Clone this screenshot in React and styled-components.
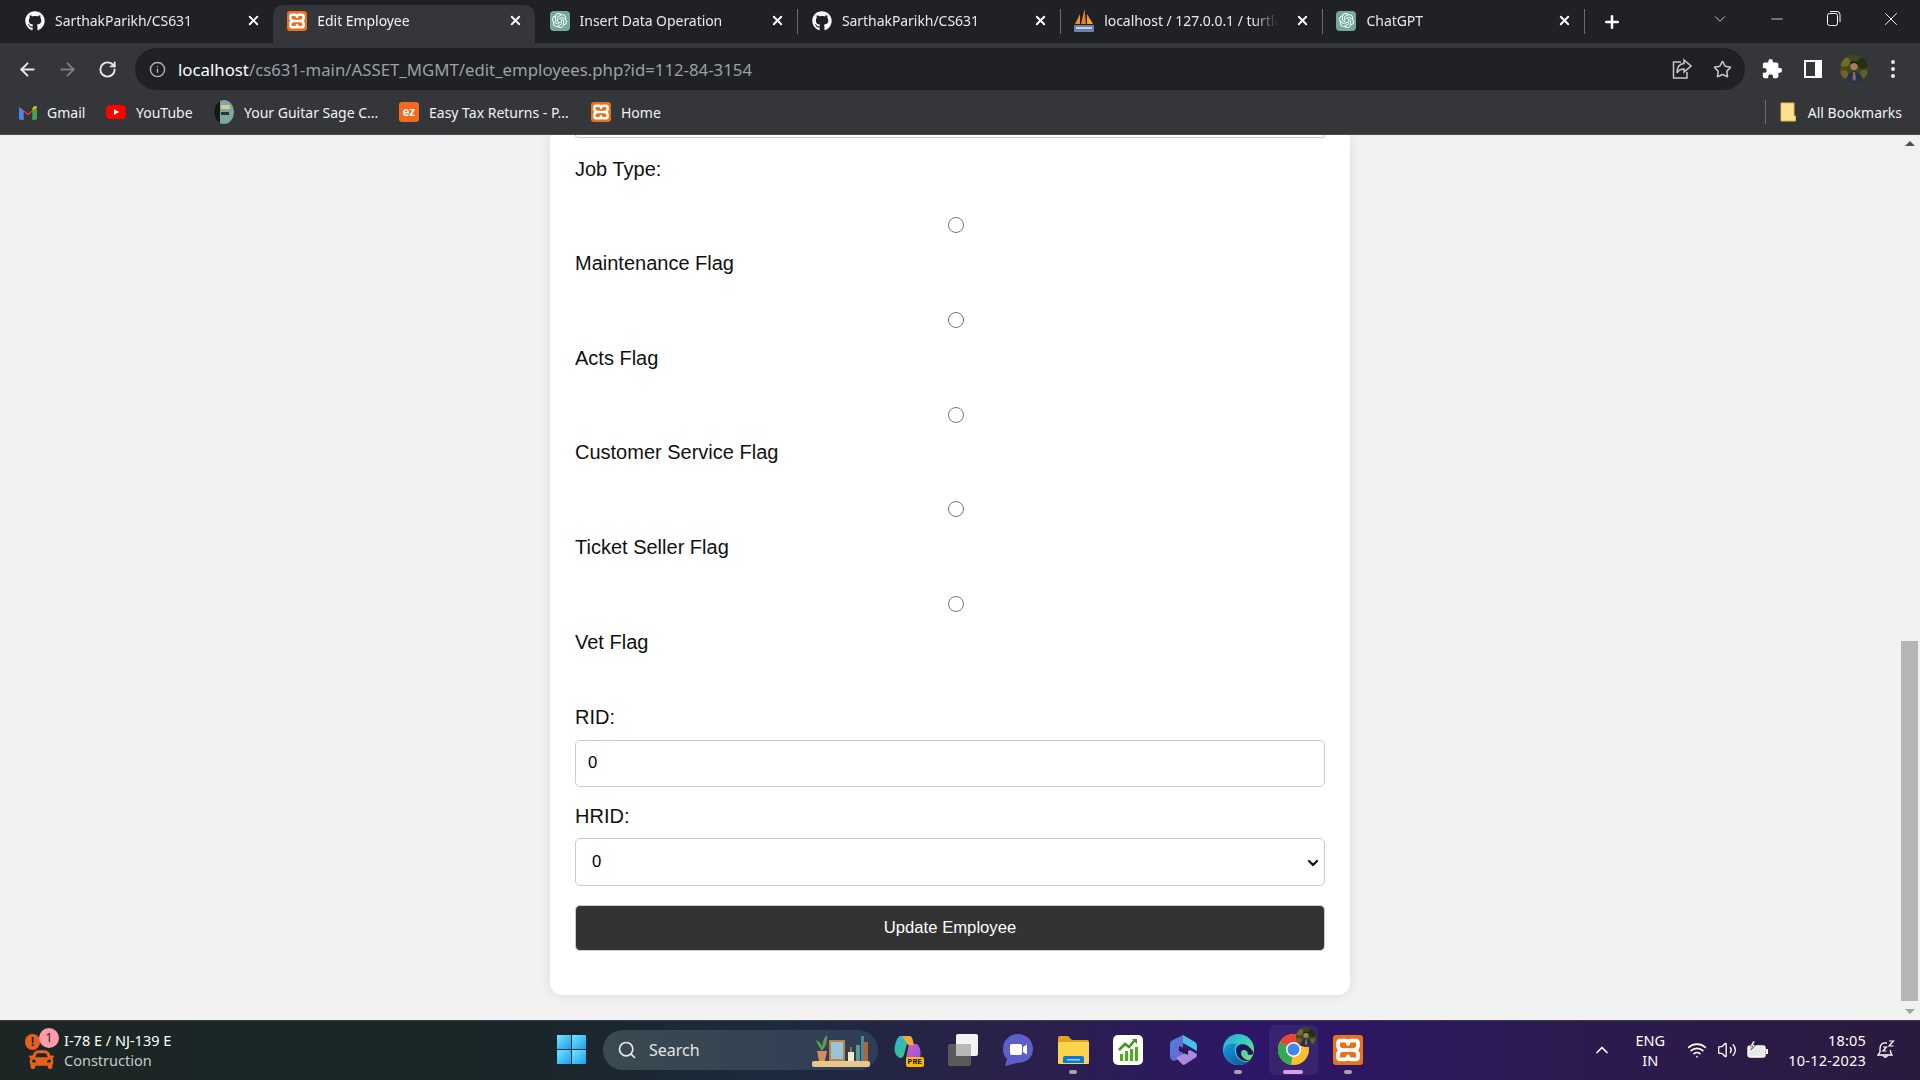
import React from "react";
import styled, { createGlobalStyle } from "styled-components";
import { ArrowLeft, ArrowRight, RotateCw, Info, Star, X, Plus, ChevronDown, ChevronUp, Minus, Search, Wifi, Volume2 } from "lucide-react";
import { FaGithub, FaCar } from "react-icons/fa";
import { MdExtension } from "react-icons/md";
import { SiOpenai, SiYoutube } from "react-icons/si";

const GlobalStyle = createGlobalStyle`
  html, body {
    margin: 0;
    padding: 0;
    height: 100%;
    overflow: hidden;
    background: #f2f2f2;
  }
`;

const uiFont = `"Noto Sans", "Open Sans", sans-serif`;

const tabs = [
  { icon: "github", title: "SarthakParikh/CS631" },
  { icon: "xampp", title: "Edit Employee", active: true },
  { icon: "gpt", title: "Insert Data Operation" },
  { icon: "github", title: "SarthakParikh/CS631", divider: true },
  { icon: "pma", title: "localhost / 127.0.0.1 / turtle", divider: true },
  { icon: "gpt", title: "ChatGPT", divider: true },
];

const flags = ["Maintenance Flag", "Acts Flag", "Customer Service Flag", "Ticket Seller Flag"];

export default function App() {
  return (
    <>
      <GlobalStyle />
      <Screen>
        <TabStrip>
          {tabs.map((tab, i) => (
            <Tab key={i} $active={tab.active} $divider={tab.divider}>
              <TabIcon kind={tab.icon} />
              <TabTitle>{tab.title}</TabTitle>
              <TabClose><X size={15} strokeWidth={3} /></TabClose>
            </Tab>
          ))}
          <NewTab $divider><Plus size={20} strokeWidth={3} /></NewTab>
          <WindowControls>
            <WindowButton $w={58}><ChevronDown size={18} strokeWidth={1} /></WindowButton>
            <WindowButton $w={56}><Minus size={18} strokeWidth={1} /></WindowButton>
            <WindowButton $w={58}><RestoreIcon /></WindowButton>
            <WindowButton $w={56}><X size={22} strokeWidth={1} /></WindowButton>
          </WindowControls>
        </TabStrip>

        <Toolbar>
          <NavButton><ArrowLeft size={21} strokeWidth={2.2} /></NavButton>
          <NavButton $dim><ArrowRight size={21} strokeWidth={2.2} /></NavButton>
          <NavButton><RotateCw size={19} strokeWidth={2.4} /></NavButton>
          <Omnibox>
            <Info size={17} color="#b0b2b6" strokeWidth={2} />
            <Url>
              <UrlHost>localhost</UrlHost>/cs631-main/ASSET_MGMT/edit_employees.php?id=112-84-3154
            </Url>
            <OmniActions>
              <ShareIcon />
              <Star size={19} color="#c4c6ca" strokeWidth={2} />
            </OmniActions>
          </Omnibox>
          <ToolbarActions>
            <MdExtension size={22} color="#fff" />
            <SidePanelIcon />
            <Avatar size={28} clipId="avToolbar" />
            <MenuDots><i /><i /><i /></MenuDots>
          </ToolbarActions>
        </Toolbar>

        <BookmarksBar>
          <Bookmark $w={87}><GmailIcon />Gmail</Bookmark>
          <Bookmark $w={108}><SiYoutube size={20} color="#ff0000" style={{ background: "linear-gradient(#fff,#fff) center/8px 8px no-repeat" }} />YouTube</Bookmark>
          <Bookmark $w={185}><GuitarIcon />Your Guitar Sage C...</Bookmark>
          <Bookmark $w={192}><EzIcon>ez</EzIcon>Easy Tax Returns - P...</Bookmark>
          <Bookmark $w={80}><XamppIcon size={20} />Home</Bookmark>
          <AllBookmarks>
            <FolderIcon />
            All Bookmarks
          </AllBookmarks>
        </BookmarksBar>

        <Viewport>
          <Page>
            <Card>
              <ClippedInput />
              <FieldLabel $gap={36}>Job Type:</FieldLabel>
              <RadioRow><input type="radio" name="job" /></RadioRow>
              {flags.map((flag) => (
                <React.Fragment key={flag}>
                  <FieldLabel $gap={37}>{flag}</FieldLabel>
                  <RadioRow><input type="radio" name="job" /></RadioRow>
                </React.Fragment>
              ))}
              <FieldLabel $gap={52}>Vet Flag</FieldLabel>
              <FieldLabel $gap={11}>RID:</FieldLabel>
              <TextInput defaultValue="0" />
              <FieldLabel $gap={10}>HRID:</FieldLabel>
              <SelectWrap>
                <SelectInput defaultValue="0">
                  <option value="0">0</option>
                </SelectInput>
                <SelectArrow><ChevronDown size={16} strokeWidth={3.4} /></SelectArrow>
              </SelectWrap>
              <SubmitButton>Update Employee</SubmitButton>
            </Card>
          </Page>
          <Scrollbar>
            <ScrollArrow $up />
            <ScrollTrack><ScrollThumb /></ScrollTrack>
            <ScrollArrow />
          </Scrollbar>
        </Viewport>

        <Taskbar>
          <Weather>
            <WeatherIcon>
              <WarnDot>!</WarnDot>
              <FaCar size={25} color="#e8611c" />
              <Badge>1</Badge>
            </WeatherIcon>
            <WeatherText>
              <strong>I-78 E / NJ-139 E</strong>
              <span>Construction</span>
            </WeatherText>
          </Weather>

          <TaskCenter>
            <WindowsLogo><i /><i /><i /><i /></WindowsLogo>
            <SearchPill>
              <Search size={20} color="#e8e8e8" strokeWidth={2} />
              <SearchText>Search</SearchText>
              <ShelfArt />
            </SearchPill>
            <TaskSlot><CopilotIcon /></TaskSlot>
            <TaskSlot><TaskViewIcon /></TaskSlot>
            <TaskSlot><MeetIcon /></TaskSlot>
            <TaskSlot $dot><ExplorerIcon /></TaskSlot>
            <TaskSlot><ChartAppIcon /></TaskSlot>
            <TaskSlot><M365Icon /></TaskSlot>
            <TaskSlot $dot><EdgeIcon /></TaskSlot>
            <TaskSlot $selected><ChromeIcon /></TaskSlot>
            <TaskSlot $dot><XamppIcon size={30} /></TaskSlot>
          </TaskCenter>

          <Tray>
            <ChevronUp size={20} color="#fff" strokeWidth={2} />
            <Lang><span>ENG</span><span>IN</span></Lang>
            <TrayIcons>
              <Wifi size={20} color="#fff" strokeWidth={2} />
              <Volume2 size={20} color="#fff" strokeWidth={1.6} />
              <BatteryIcon />
            </TrayIcons>
            <Clock><span>18:05</span><span>10-12-2023</span></Clock>
            <BellIcon />
          </Tray>
        </Taskbar>
      </Screen>
    </>
  );
}

function TabIcon({ kind }) {
  if (kind === "github") return <FaGithub size={20} color="#fff" />;
  if (kind === "xampp") return <XamppIcon size={20} />;
  if (kind === "gpt") {
    return (
      <GptBadge><SiOpenai size={15} color="#fff" /></GptBadge>
    );
  }
  return <PmaIcon />;
}

function XamppIcon({ size }) {
  return (
    <XamppBadge $size={size}>
      <svg width={size} height={size} viewBox="0 0 24 24" fill="none" stroke="#fff" strokeWidth="3" strokeLinejoin="round">
        <path d="M6 4.500 H9.500 Q12 4.500 12 7 Q12 4.500 14.500 4.500 H18 Q20 4.500 20 6.500 V8.500 Q20 11 17 12 Q20 13 20 15.500 V17.500 Q20 19.500 18 19.500 H14.500 Q12 19.500 12 17 Q12 19.500 9.500 19.500 H6 Q4 19.500 4 17.500 V15.500 Q4 13 7 12 Q4 11 4 8.500 V6.500 Q4 4.500 6 4.500Z" />
        <path d="M7 12 H17" />
      </svg>
    </XamppBadge>
  );
}

function PmaIcon() {
  return (
    <svg width="20" height="24" viewBox="0 0 20 24">
      <path d="M1 15 L6 5 L6 15Z" fill="#f0901e" />
      <path d="M7 15 L10.5 0 L12 15Z" fill="#e8821a" />
      <path d="M13 15 L13 5 L19 15Z" fill="#f5a030" />
      <rect x="0" y="16" width="20" height="7" rx="1" fill="#6a7fb0" />
      <rect x="2" y="18" width="16" height="2" fill="#c6cfe4" />
    </svg>
  );
}

function RestoreIcon() {
  return (
    <svg width="16" height="18" viewBox="0 0 16 18" fill="none" stroke="#fff" strokeWidth="1">
      <rect x="1.5" y="3.5" width="10" height="12" rx="2" />
      <path d="M4 1.5 H11 Q14 1.5 14 4.5 V12" />
    </svg>
  );
}

function ShareIcon() {
  return (
    <svg width="20" height="22" viewBox="0 0 20 22" fill="none" stroke="#c4c6ca" strokeWidth="1.5">
      <path d="M9 4 H1.5 V20 H15 V14" />
      <path d="M12 2 L19 8 L12 14 V11 Q7 11 5 15 Q5 6 12 5.500Z" />
    </svg>
  );
}

function SidePanelIcon() {
  return (
    <svg width="18" height="18" viewBox="0 0 18 18">
      <path fillRule="evenodd" d="M0 0H18V18H0Z M2 2V16H11V2Z" fill="#fff" />
    </svg>
  );
}

function Avatar({ size, clipId }) {
  return (
    <svg width={size} height={size} viewBox="0 0 28 28">
      <defs>
        <clipPath id={clipId}><circle cx="14" cy="14" r="14" /></clipPath>
      </defs>
      <g clipPath={`url(#${clipId})`}>
        <rect width="28" height="28" fill="#3c4a1e" />
        <circle cx="5" cy="7" r="5" fill="#6c6e26" />
        <circle cx="23" cy="8" r="6" fill="#25300f" />
        <circle cx="4" cy="19" r="4" fill="#7a5c2a" />
        <circle cx="24" cy="19" r="4" fill="#5a6428" />
        <rect x="10.500" y="6.500" width="7" height="3" rx="1.500" fill="#1c1512" />
        <circle cx="14" cy="11.500" r="3.600" fill="#a87a60" />
        <path d="M6 28 Q7 17 14 16 Q22 17 23 28Z" fill="#27304e" />
        <path d="M13 17 L15 17 L16 24 L14 26 L12.500 24Z" fill="#8a6a5a" />
      </g>
    </svg>
  );
}

function GmailIcon() {
  return (
    <svg width="18" height="15" viewBox="0 0 20 16">
      <path d="M0 2 L10 9 L20 2 V14 Q20 16 18 16 H15 V7 L10 11 L5 7 V16 H2 Q0 16 0 14Z" fill="#ea4335" />
      <path d="M0 2 V14 Q0 16 2 16 H5 V6Z" fill="#4285f4" />
      <path d="M20 2 V14 Q20 16 18 16 H15 V6Z" fill="#34a853" />
      <path d="M15 6 L20 2 Q19 0 17 1 L15 3Z" fill="#fbbc04" />
    </svg>
  );
}

function GuitarIcon() {
  return (
    <svg width="20" height="24" viewBox="0 0 20 24">
      <ellipse cx="10" cy="12" rx="10" ry="12" fill="#7fa6a0" />
      <path d="M0 12 A10 12 0 0 1 6 1 V23 A10 12 0 0 1 0 12Z" fill="#12181a" />
      <rect x="7" y="5" width="9" height="4" fill="#d8c88a" />
      <rect x="7" y="12" width="8" height="3" fill="#24383a" />
    </svg>
  );
}

function FolderIcon() {
  return (
    <svg width="16" height="20" viewBox="0 0 16 20">
      <path d="M1 1 H14 V14 H15.500 V19 H1Z" fill="#fde293" stroke="#e6bb3c" strokeWidth="1" />
    </svg>
  );
}

function ShelfArt() {
  return (
    <svg width="60" height="36" viewBox="0 0 60 36">
      <rect x="0" y="29" width="58" height="6" rx="2" fill="#e8c88a" />
      <path d="M5 19 H15 L13 29 H7Z" fill="#d88a68" />
      <path d="M10 19 Q5 12 4 8 Q9 10 10 15 Q11 6 15 3 Q16 12 10 19Z" fill="#5aa04a" />
      <rect x="17" y="8" width="16" height="21" fill="#b98448" />
      <rect x="19" y="10" width="12" height="17" fill="#9ac4d8" />
      <rect x="36" y="20" width="6" height="9" fill="#f4e8cc" />
      <rect x="38.500" y="15" width="1" height="5" fill="#f0a030" />
      <rect x="44" y="13" width="4" height="16" fill="#5c9a8a" />
      <rect x="49" y="4" width="3" height="25" fill="#4a8a9a" />
      <rect x="52" y="10" width="4" height="19" fill="#b0643a" />
    </svg>
  );
}

function CopilotIcon() {
  return (
    <CopilotWrap>
      <svg width="28" height="24" viewBox="0 0 28 24">
        <defs>
          <linearGradient id="cpA" x1="0" y1="0" x2="1" y2="1">
            <stop offset="0" stopColor="#2cb6e8" />
            <stop offset="1" stopColor="#3fc06a" />
          </linearGradient>
          <linearGradient id="cpB" x1="0" y1="0" x2="1" y2="1">
            <stop offset="0" stopColor="#e05ab0" />
            <stop offset="1" stopColor="#8a5ae8" />
          </linearGradient>
        </defs>
        <path d="M6 1 H15 L10 20 Q9 23 6 23 Q-1 20 1 10 Q3 2 6 1Z" fill="url(#cpA)" />
        <path d="M15 9 H23 Q28 14 26 23 H12Z" fill="url(#cpB)" />
        <path d="M8 1 H16 Q18 1 19 6 L20 10 H14Z" fill="#f0a83c" />
      </svg>
      <PreTag>PRE</PreTag>
    </CopilotWrap>
  );
}

function TaskViewIcon() {
  return (
    <svg width="30" height="32" viewBox="0 0 30 32">
      <rect x="0" y="10" width="23" height="22" rx="2" fill="#5a5a5a" />
      <rect x="8" y="0" width="22" height="22" rx="2" fill="#f2f2f2" />
      <rect x="8" y="10" width="15" height="12" fill="#b8b8b8" />
    </svg>
  );
}

function MeetIcon() {
  return (
    <svg width="30" height="32" viewBox="0 0 30 32">
      <path d="M15 0 C24 0 30 7 30 15 C30 24 23 29 14 29 L2 32 L4 25 C1 22 0 19 0 15 C0 6 7 0 15 0Z" fill="#5b5fc7" />
      <rect x="7" y="10" width="12" height="11" rx="2" fill="#fff" />
      <path d="M20 13 L24 10.500 V20.500 L20 18Z" fill="#fff" />
    </svg>
  );
}

function ExplorerIcon() {
  return (
    <svg width="31" height="28" viewBox="0 0 31 28">
      <path d="M0 2 Q0 0 2 0 H10 L14 4 H29 Q31 4 31 6 V10 H0Z" fill="#e0a418" />
      <rect x="0" y="6" width="31" height="22" rx="1" fill="#fcd34d" />
      <path d="M5 27 V22 Q5 20 7 20 H24 Q26 20 26 22 V27Z" fill="#0f78d4" />
      <rect x="9" y="23" width="13" height="1.500" fill="#8ed0ff" />
    </svg>
  );
}

function ChartAppIcon() {
  return (
    <svg width="30" height="30" viewBox="0 0 30 30">
      <rect width="30" height="30" rx="5" fill="#fff" />
      <rect x="7" y="19" width="3" height="7" fill="#4caf1a" />
      <rect x="12" y="16" width="3" height="10" fill="#4caf1a" />
      <rect x="17" y="14" width="3" height="12" fill="#4caf1a" />
      <rect x="22" y="12" width="3" height="14" fill="#4caf1a" />
      <path d="M6 15 L12 9 L16 12 L22 5" fill="none" stroke="#3a9a10" strokeWidth="2.500" />
      <path d="M19 4 H24 V9Z" fill="#3a9a10" />
    </svg>
  );
}

function M365Icon() {
  return (
    <svg width="27" height="30" viewBox="0 0 27 30">
      <defs>
        <linearGradient id="mA" x1="0" y1="0" x2="1" y2="1">
          <stop offset="0" stopColor="#3f8ad8" />
          <stop offset="1" stopColor="#7a5ad8" />
        </linearGradient>
      </defs>
      <path d="M13 0 L25 7 Q27 8 27 11 V16 L13 8Z" fill="#46c0e8" />
      <path d="M0 9 Q0 6 3 5 L13 0 V22 L4 26 Q0 25 0 21Z" fill="url(#mA)" />
      <path d="M6 23 L20 15 L27 19 Q27 22 25 23 L14 30 Q13 30 12 29Z" fill="#a98ae0" />
      <path d="M9 11 L18 15 V20 L9 16Z" fill="#2a1a5a" />
    </svg>
  );
}

function EdgeIcon() {
  return (
    <svg width="31" height="31" viewBox="0 0 31 31">
      <defs>
        <linearGradient id="edgeA" x1="0" y1="0" x2="1" y2="0.8">
          <stop offset="0" stopColor="#2aa8e0" />
          <stop offset="0.55" stopColor="#38cfc0" />
          <stop offset="1" stopColor="#7ee06a" />
        </linearGradient>
        <linearGradient id="edgeB" x1="0" y1="0" x2="1" y2="1">
          <stop offset="0" stopColor="#1c9ae0" />
          <stop offset="1" stopColor="#0c4f9c" />
        </linearGradient>
      </defs>
      <circle cx="15.500" cy="15.500" r="15.500" fill="url(#edgeA)" />
      <path d="M0.500 19 C1 11 8 8 14 10 C10 13 11 22 17 26 C21 28.500 25 28.500 27 26.500 C24 30 19.500 31 15.500 31 C8 31 1.500 26 0.500 19Z" fill="url(#edgeB)" />
      <path d="M13 16 C13 10 21 9 25 12 C29 15 31 19 30 20 C27 22 24 21 24.500 18 C22 15 18 15.500 18 19 C18 23 22 26 27 26.500 C20 29 13 24 13 16Z" fill="#23155a" />
    </svg>
  );
}

function ChromeIcon() {
  return (
    <ChromeWrap>
      <svg width="31" height="31" viewBox="0 0 31 31">
        <circle cx="15.500" cy="15.500" r="15.500" fill="#fbc02d" />
        <path d="M15.500 15.500 L2 8 A15.500 15.500 0 0 1 29 8Z" fill="#ea4335" />
        <path d="M15.500 15.500 L2 8 A15.500 15.500 0 0 0 13 31Z" fill="#34a853" />
        <circle cx="15.500" cy="15.500" r="7.500" fill="#fff" />
        <circle cx="15.500" cy="15.500" r="6" fill="#4285f4" />
      </svg>
      <ChromeAvatar><Avatar size={20} clipId="avChrome" /></ChromeAvatar>
    </ChromeWrap>
  );
}

function BatteryIcon() {
  return (
    <svg width="22" height="18" viewBox="0 0 22 18" fill="none">
      <rect x="1" y="5" width="17" height="11" rx="2" stroke="#fff" strokeWidth="1.400" fill="#e8e8e8" />
      <rect x="19" y="8" width="2" height="5" fill="#fff" />
      <path d="M6 0 L3 5 H6 L4 9 L9 4 H6.500 L8 0Z" fill="#fff" stroke="#2a1a40" strokeWidth="0.600" />
    </svg>
  );
}

function BellIcon() {
  return (
    <svg width="18" height="20" viewBox="0 0 18 20" fill="none" stroke="#fff" strokeWidth="1.300">
      <path d="M10 3 Q3 2 3 9 V12 L1 15 H15 L13.500 12 V10" />
      <path d="M6 15.500 Q8 19 10.500 15.500" />
      <path d="M6 7 H9.500 L6 11 H9.500 M12 1 H16.500 L12 6 H16.500" strokeWidth="1.200" />
    </svg>
  );
}

const Screen = styled.div`
  width: 1920px;
  height: 1080px;
  display: flex;
  flex-direction: column;
  overflow: hidden;
  font-family: ${uiFont};
`;

// Browser chrome

const TabStrip = styled.div`
  height: 43px;
  flex: none;
  display: flex;
  padding-left: 10.500px;
  background: #202124;
  color: #e8eaed;
`;

const Tab = styled.div`
  position: relative;
  width: 262.300px;
  height: 38px;
  margin-top: 5px;
  box-sizing: border-box;
  padding: 0 12px 7px 14.500px;
  display: flex;
  align-items: center;
  gap: 10px;
  border-radius: 10px 10px 0 0;
  background: ${({ $active }) => ($active ? "#35363a" : "transparent")};
  color: ${({ $active }) => ($active ? "#f1f3f4" : "#e8eaed")};

  &::before {
    content: "";
    display: ${({ $divider }) => ($divider ? "block" : "none")};
    position: absolute;
    left: 0;
    top: 4px;
    height: 25px;
    width: 1px;
    background: #6a6c70;
  }
`;

const TabTitle = styled.span`
  flex: 1;
  min-width: 0;
  overflow: hidden;
  white-space: nowrap;
  font-size: 14px;
  letter-spacing: -0.05px;
  mask-image: linear-gradient(to right, #000 82%, transparent 96%);
`;

const TabClose = styled.span`
  display: flex;
  color: #fff;
`;

const NewTab = styled.div`
  position: relative;
  margin-top: 5px;
  height: 33px;
  padding-left: 18px;
  display: flex;
  align-items: center;
  color: #fff;

  &::before {
    content: "";
    position: absolute;
    left: 0;
    top: 4px;
    height: 25px;
    width: 1px;
    background: #6a6c70;
  }
`;

const WindowControls = styled.div`
  margin-left: auto;
  margin-right: 1px;
  display: flex;
  align-items: flex-start;
  color: #fff;
`;

const WindowButton = styled.div`
  width: ${({ $w }) => $w}px;
  height: 38px;
  display: flex;
  align-items: center;
  justify-content: center;
`;

const GptBadge = styled.span`
  width: 20px;
  height: 20px;
  flex: none;
  border-radius: 4px;
  background: #74aa9c;
  display: flex;
  align-items: center;
  justify-content: center;
`;

const XamppBadge = styled.span`
  width: ${({ $size }) => $size}px;
  height: ${({ $size }) => $size}px;
  flex: none;
  border-radius: 3px;
  background: #e9701f;
  display: flex;
  align-items: center;
  justify-content: center;
`;

const Toolbar = styled.div`
  height: 47px;
  flex: none;
  box-sizing: border-box;
  padding-top: 5px;
  display: flex;
  align-items: flex-start;
  background: #35363a;
`;

const NavButton = styled.div`
  width: 40px;
  height: 42px;
  display: flex;
  align-items: center;
  justify-content: center;
  color: ${({ $dim }) => ($dim ? "#7b7d81" : "#e8eaed")};
  &:first-child {
    margin-left: 7px;
  }
`;

const Omnibox = styled.div`
  width: 1610px;
  height: 42px;
  margin-left: 8px;
  box-sizing: border-box;
  padding: 0 13px 0 14px;
  border-radius: 21px;
  background: #202124;
  display: flex;
  align-items: center;
  font-size: 16.800px;
  color: #9aa0a6;
`;

const Url = styled.span`
  margin-left: 12px;
`;

const UrlHost = styled.span`
  color: #fff;
`;

const OmniActions = styled.div`
  margin-left: auto;
  display: flex;
  align-items: center;
  gap: 21px;
`;

const ToolbarActions = styled.div`
  height: 42px;
  flex: 1;
  padding-left: 16px;
  display: flex;
  align-items: center;
  & > svg:nth-child(1) { margin-right: 21px; }
  & > svg:nth-child(2) { margin-right: 18px; }
  & > svg:nth-child(3) { margin-right: 23px; }
`;

const MenuDots = styled.div`
  display: flex;
  flex-direction: column;
  gap: 3px;
  i {
    width: 4px;
    height: 4px;
    border-radius: 50%;
    background: #e8eaed;
  }
`;

const BookmarksBar = styled.div`
  height: 45px;
  flex: none;
  box-sizing: border-box;
  padding: 0 18px 0 19px;
  display: flex;
  align-items: center;
  background: #35363a;
  border-bottom: 1px solid #4a4b4f;
  color: #f1f3f4;
  font-size: 14px;
`;

const Bookmark = styled.div`
  width: ${({ $w }) => $w}px;
  flex: none;
  display: flex;
  align-items: center;
  gap: 10px;
  white-space: nowrap;
`;

const EzIcon = styled.span`
  width: 20px;
  height: 20px;
  flex: none;
  border-radius: 3px;
  background: #f26a1b;
  color: #fff;
  font: 700 12px/20px "Liberation Sans", sans-serif;
  text-align: center;
`;

const AllBookmarks = styled.div`
  margin-left: auto;
  height: 24px;
  padding-left: 14px;
  border-left: 1px solid #6a6c70;
  display: flex;
  align-items: center;
  gap: 12px;
`;

// Page

const Viewport = styled.div`
  flex: 1;
  min-height: 0;
  display: flex;
  background: #f2f2f2;
`;

const Page = styled.main`
  flex: 1;
  min-width: 0;
  overflow: hidden;
`;

const Card = styled.div`
  width: 800px;
  height: 860px;
  margin-left: 550px;
  box-sizing: border-box;
  padding: 0 25px;
  background: #fff;
  border-radius: 0 0 12px 12px;
  box-shadow: 0 0 12px rgba(0, 0, 0, 0.1);
  font-family: "Liberation Sans", Arial, sans-serif;
  color: #111;
`;

const ClippedInput = styled.div`
  height: 2px;
  margin-bottom: 20px;
  border: 1px solid #ccc;
  border-top: none;
  border-radius: 0 0 5px 5px;
`;

const FieldLabel = styled.label`
  display: block;
  font-size: 20px;
  line-height: 23px;
  margin-bottom: ${({ $gap }) => $gap}px;
`;

const RadioRow = styled.div`
  height: 16px;
  margin-bottom: 18.750px;
  padding-left: 12px;
  display: flex;
  justify-content: center;

  input {
    width: 16px;
    height: 16px;
    margin: 0;
  }
`;

const TextInput = styled.input`
  display: block;
  width: 100%;
  height: 47px;
  margin-bottom: 18px;
  box-sizing: border-box;
  padding: 0 12px;
  border: 1px solid #ccc;
  border-radius: 5px;
  font: 16.670px "Liberation Sans", Arial, sans-serif;
  color: #000;
`;

const SelectWrap = styled.div`
  position: relative;
  margin-bottom: 19px;
`;

const SelectInput = styled.select`
  display: block;
  width: 100%;
  height: 48px;
  box-sizing: border-box;
  padding: 0 16px;
  border: 1px solid #ccc;
  border-radius: 5px;
  background: #fff;
  appearance: none;
  font: 16.670px "Liberation Sans", Arial, sans-serif;
  color: #000;
`;

const SelectArrow = styled.span`
  position: absolute;
  right: 4px;
  top: 17px;
  display: flex;
  color: #111;
  pointer-events: none;
`;

const SubmitButton = styled.button`
  display: block;
  width: 100%;
  height: 46px;
  border: 1px solid #ccc;
  border-radius: 5px;
  background: #333;
  color: #fff;
  font: 16.670px "Liberation Sans", Arial, sans-serif;
`;

const Scrollbar = styled.div`
  width: 19px;
  flex: none;
  box-sizing: border-box;
  padding-right: 2px;
  display: flex;
  flex-direction: column;
  background: #f1f1f1;
`;

const ScrollArrow = styled.div`
  height: 17px;
  flex: none;
  display: flex;
  align-items: center;
  justify-content: center;

  &::after {
    content: "";
    border-left: 5px solid transparent;
    border-right: 5px solid transparent;
    ${({ $up }) => ($up ? "border-bottom: 5px solid #505050;" : "border-top: 5px solid #a3a3a3;")}
  }
`;

const ScrollTrack = styled.div`
  flex: 1;
  padding-top: 489px;
`;

const ScrollThumb = styled.div`
  height: 360px;
  background: #b5b5b5;
`;

// Windows taskbar

const Taskbar = styled.footer`
  height: 60px;
  flex: none;
  box-sizing: border-box;
  padding-bottom: 2px;
  border-top: 1px solid #3a3a44;
  display: grid;
  grid-template-columns: 557px 1fr auto;
  align-items: center;
  background: linear-gradient(90deg, #1c2624 0%, #1a2629 28%, #1c2a3e 40%, #2a2148 52%, #2d1668 66%, #2c1a52 80%, #2a1a3e 100%);
  color: #fff;
  font-family: ${uiFont};
`;

const Weather = styled.div`
  padding-left: 24px;
  display: flex;
  align-items: center;
`;

const WeatherIcon = styled.div`
  position: relative;
  width: 40px;
  height: 44px;
  display: flex;
  align-items: flex-end;
  justify-content: flex-start;
  padding-left: 5px;
  box-sizing: border-box;
`;

const WarnDot = styled.span`
  position: absolute;
  left: 1px;
  top: 6px;
  width: 15px;
  height: 16px;
  border-radius: 50%;
  background: #e8611c;
  color: #201a18;
  font: 700 12px/16px "Liberation Sans", sans-serif;
  text-align: center;
`;

const Badge = styled.span`
  position: absolute;
  left: 15px;
  top: 0;
  width: 20px;
  height: 20px;
  border-radius: 50%;
  background: #ff9ba8;
  color: #2a1a1a;
  font-size: 12px;
  line-height: 20px;
  text-align: center;
`;

const WeatherText = styled.div`
  display: flex;
  flex-direction: column;
  font-size: 14.500px;
  line-height: 20px;
  strong {
    font-weight: 400;
    color: #fff;
  }
  span {
    color: #c8c8c8;
  }
`;

const TaskCenter = styled.div`
  display: flex;
  align-items: center;
`;

const WindowsLogo = styled.div`
  width: 29px;
  height: 29px;
  margin-right: 17px;
  display: grid;
  grid-template-columns: 1fr 1fr;
  gap: 1px;
  i {
    display: block;
    background: linear-gradient(135deg, #74e4ff, #1a9ff0);
  }
`;

const SearchPill = styled.div`
  width: 275px;
  height: 40px;
  margin-right: 2.500px;
  box-sizing: border-box;
  padding: 0 6px 0 14px;
  border-radius: 20px;
  background: linear-gradient(90deg, #3a4a50, #2e3d56);
  display: flex;
  align-items: center;
`;

const SearchText = styled.span`
  margin-left: 12px;
  margin-right: auto;
  font-size: 16px;
  color: #e4e4e4;
`;

const TaskSlot = styled.div`
  position: relative;
  width: 55px;
  height: 50px;
  display: flex;
  align-items: center;
  justify-content: center;

  &::before {
    content: "";
    display: ${({ $selected }) => ($selected ? "block" : "none")};
    position: absolute;
    inset: 0 3px;
    border-radius: 6px;
    background: rgba(255, 255, 255, 0.06);
  }

  &::after {
    content: "";
    display: ${({ $dot, $selected }) => ($dot || $selected ? "block" : "none")};
    position: absolute;
    left: 50%;
    bottom: 1px;
    width: ${({ $selected }) => ($selected ? "20px" : "8px")};
    height: 4px;
    transform: translateX(-50%);
    border-radius: 2px;
    background: ${({ $selected }) => ($selected ? "#d8a0e8" : "#a8a0b0")};
  }
`;

const CopilotWrap = styled.div`
  position: relative;
  width: 28px;
  height: 30px;
`;

const PreTag = styled.span`
  position: absolute;
  right: -2px;
  bottom: -2px;
  padding: 0 2px;
  border-radius: 2px;
  background: #ffb900;
  color: #111;
  font: 700 8px/10px "Liberation Mono", monospace;
`;

const ChromeWrap = styled.div`
  position: relative;
  z-index: 1;
  width: 31px;
  height: 31px;
`;

const ChromeAvatar = styled.span`
  position: absolute;
  right: -7px;
  top: -7px;
  display: block;
  line-height: 0;
`;

const Tray = styled.div`
  display: flex;
  align-items: center;
  padding-right: 25px;
`;

const Lang = styled.div`
  width: 40px;
  margin-left: 18px;
  margin-right: 17px;
  display: flex;
  flex-direction: column;
  align-items: center;
  font-size: 14.500px;
  line-height: 20px;
`;

const TrayIcons = styled.div`
  display: flex;
  align-items: center;
  gap: 10px;
`;

const Clock = styled.div`
  margin-left: 19px;
  margin-right: 11px;
  display: flex;
  flex-direction: column;
  align-items: flex-end;
  font-size: 14.500px;
  letter-spacing: 0.2px;
  line-height: 20px;
  white-space: nowrap;
`;
